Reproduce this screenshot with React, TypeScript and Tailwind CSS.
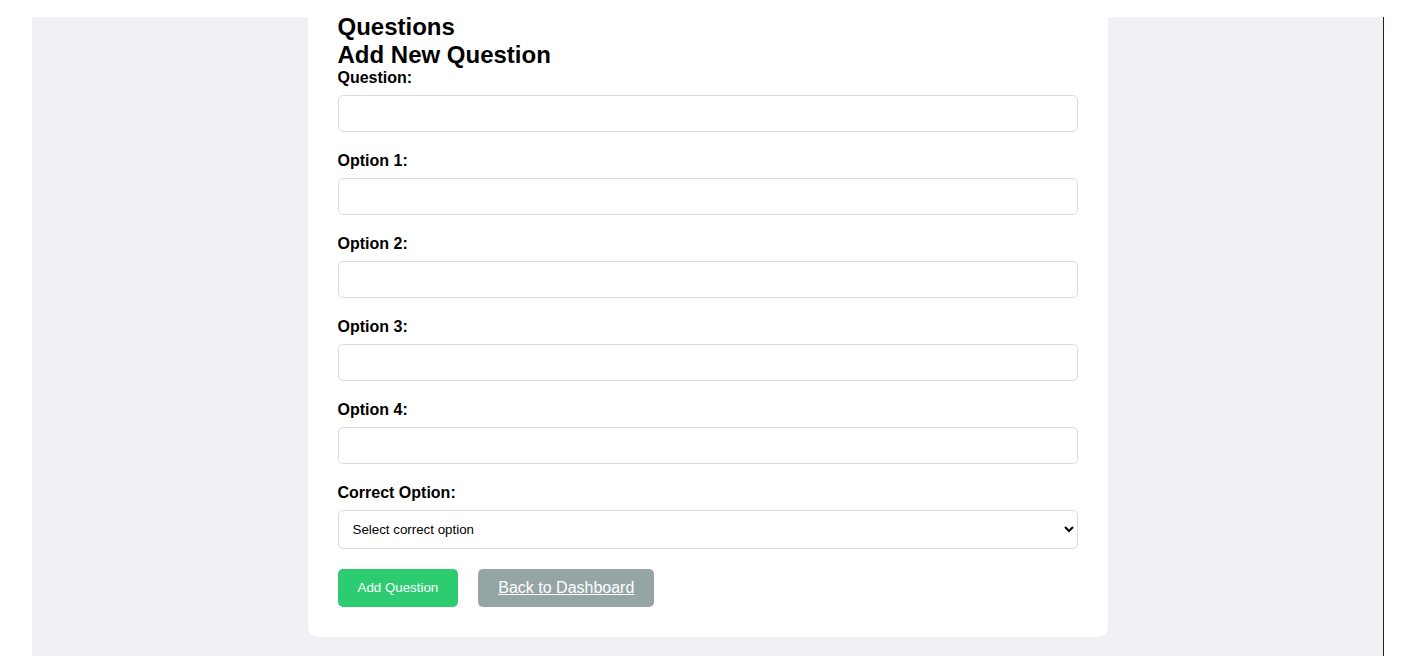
import React from "react";

function Field({ label }: { label: string }) {
  return (
    <div>
      <label className="block text-[16px] leading-[18px] font-bold mb-[8px]">{label}</label>
      <input
        type="text"
        className="block w-full h-[37px] border border-[#dddddd] rounded-[5px] px-[10px] mb-[20px] bg-white outline-none"
      />
    </div>
  );
}

export default function App() {
  return (
    <div
      className="min-h-[672px] bg-white text-black"
      style={{ fontFamily: '"Liberation Sans", Arial, sans-serif' }}
    >
      <div className="h-[17px]" />
      <div className="flow-root ml-[32px] w-[1352px] h-[639px] bg-[#f0f1f5] border-r border-[#222222]">
        <div className="mx-auto w-[800px] -mt-[4px] bg-white rounded-b-[10px] px-[30px] pb-[30px]">
          <h2 className="text-[24px] leading-[28px] font-bold">Questions</h2>
          <h2 className="text-[24px] leading-[28px] font-bold">Add New Question</h2>
          <Field label="Question:" />
          <Field label="Option 1:" />
          <Field label="Option 2:" />
          <Field label="Option 3:" />
          <Field label="Option 4:" />
          <label className="block text-[16px] leading-[18px] font-bold mb-[8px]">Correct Option:</label>
          <select className="block w-full h-[39px] border border-[#dddddd] rounded-[5px] px-[10px] bg-white text-[13.33px] text-black mb-[20px]">
            <option>Select correct option</option>
          </select>
          <div className="flex gap-[20px]">
            <button className="h-[38px] px-[20px] bg-[#2ecc71] text-white text-[13.33px] rounded-[5px]">
              Add Question
            </button>
            <a
              href="#"
              className="h-[38px] px-[20px] bg-[#95a5a6] text-white text-[16px] underline rounded-[5px] flex items-center"
            >
              Back to Dashboard
            </a>
          </div>
        </div>
      </div>
    </div>
  );
}
